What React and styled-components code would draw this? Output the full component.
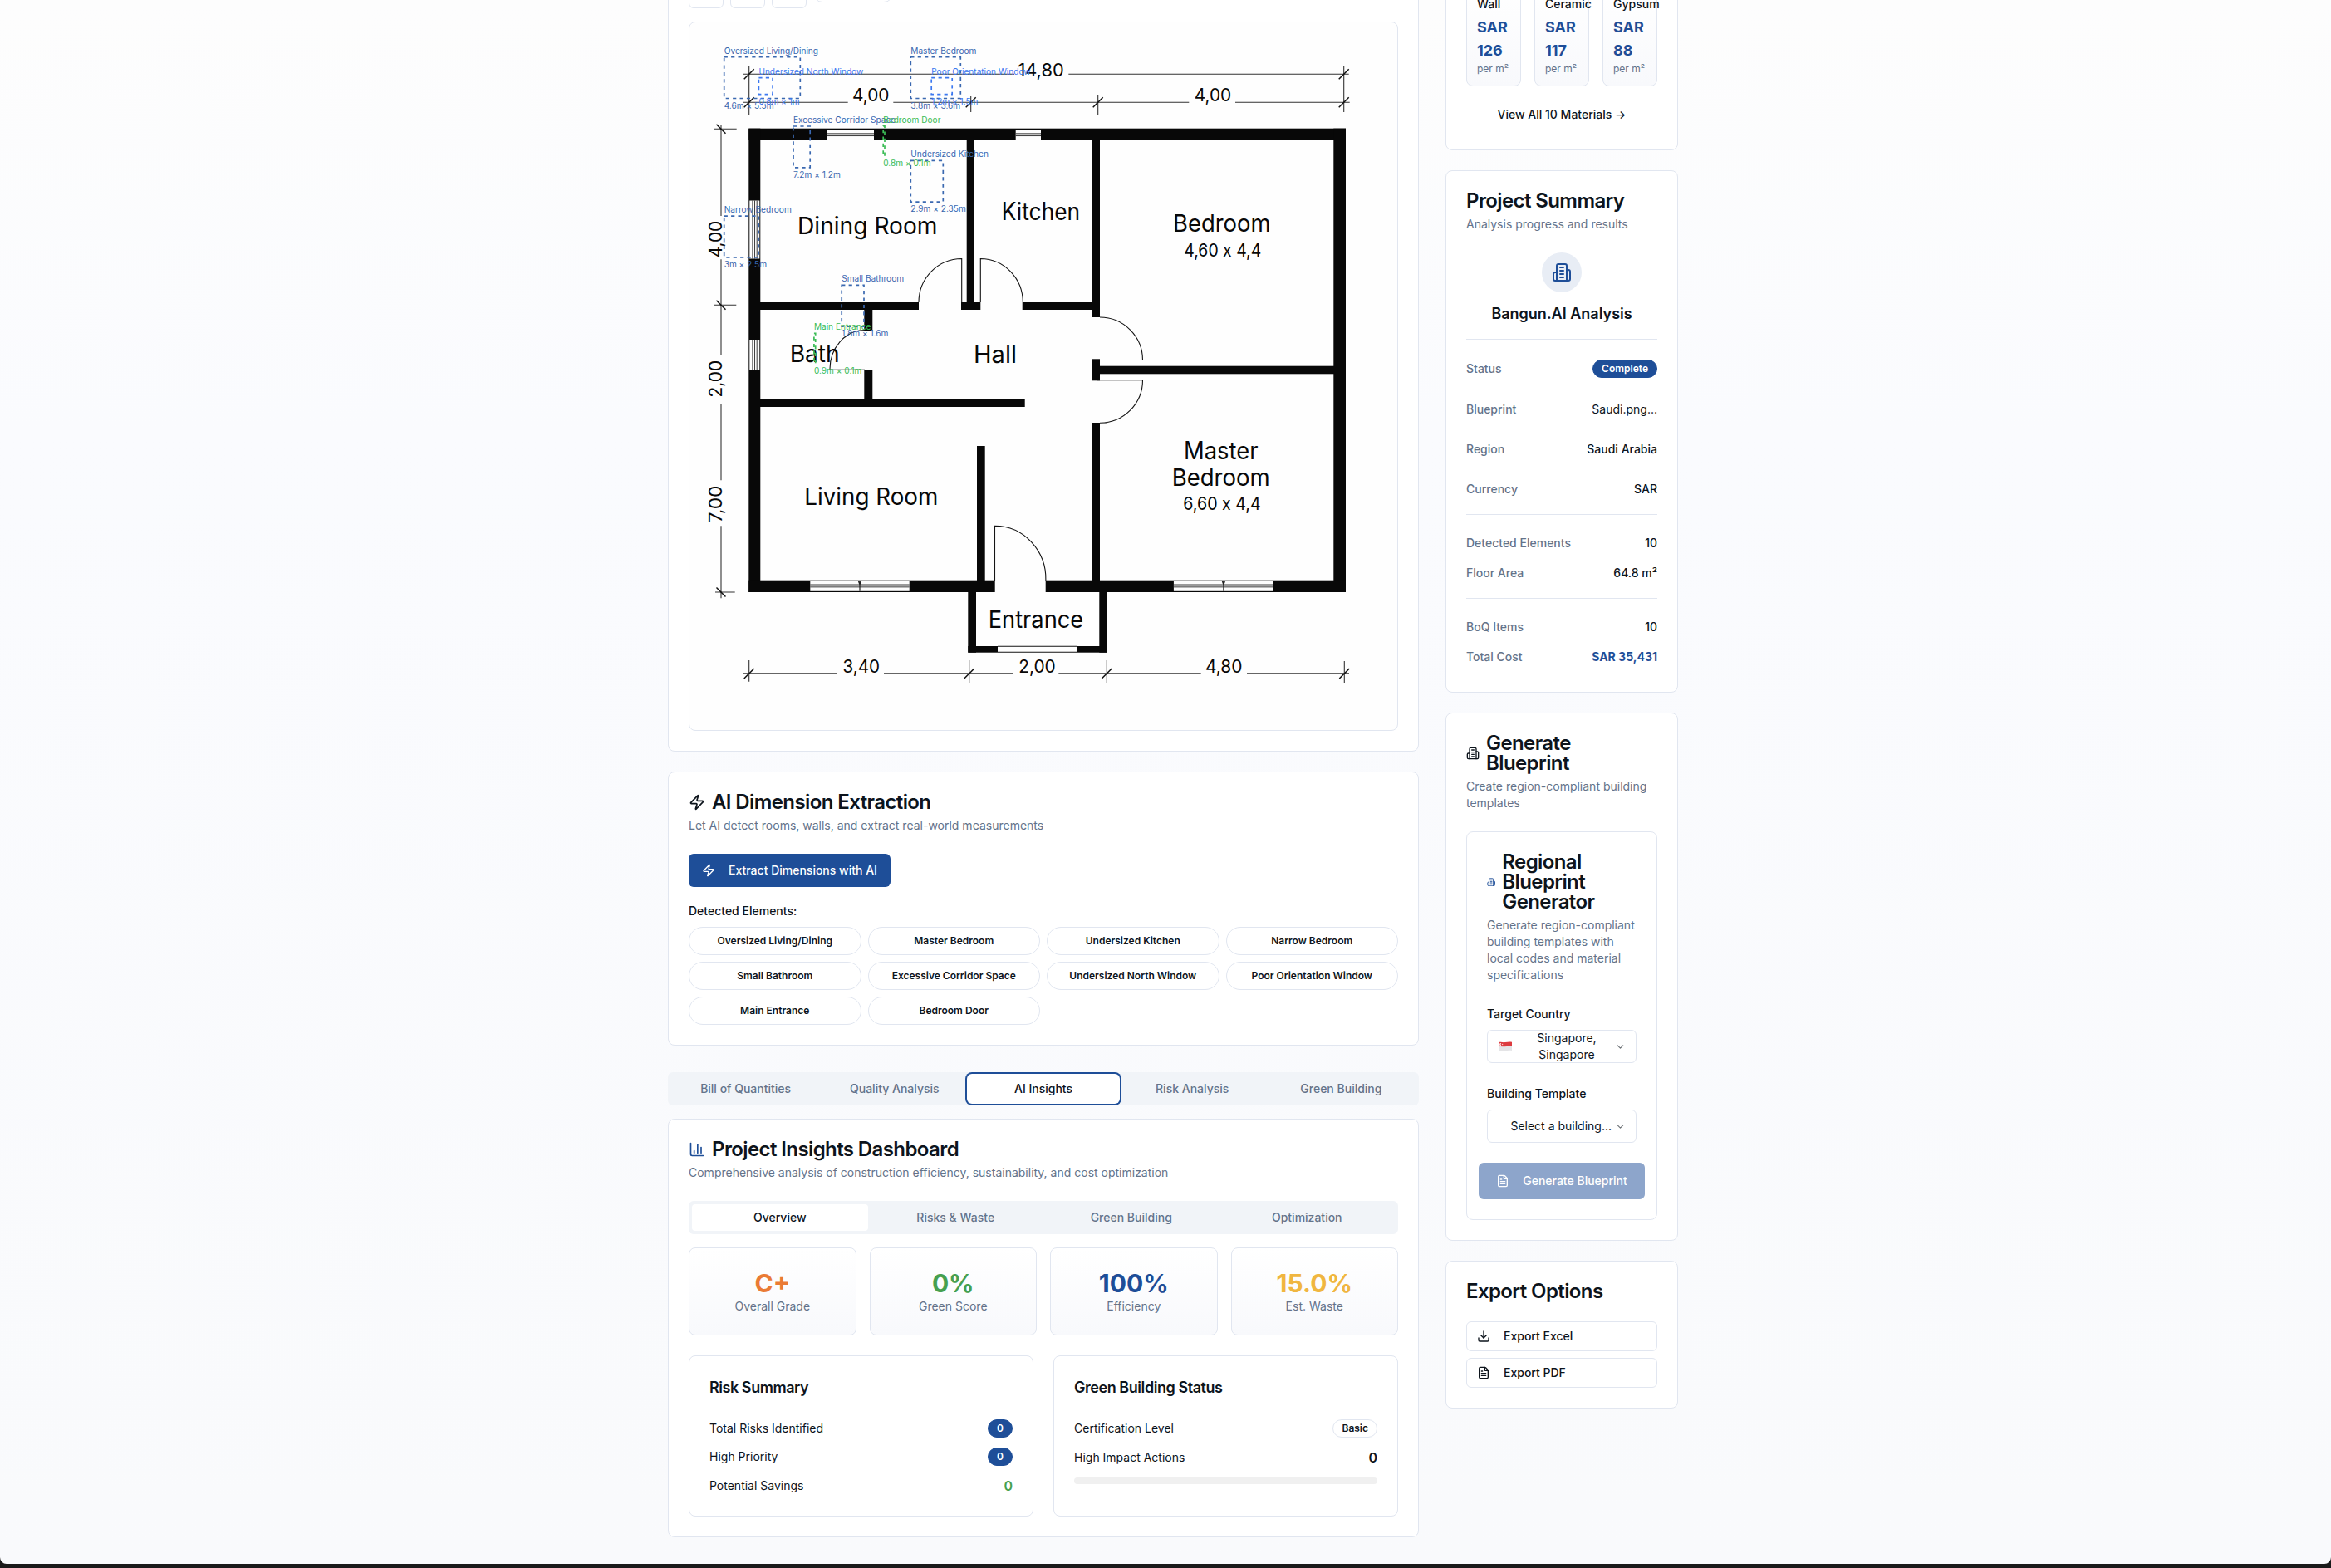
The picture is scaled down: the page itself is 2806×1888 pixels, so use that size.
import React from "react";
import styled, { createGlobalStyle, css } from "styled-components";
import { Zap, ChartColumn, FileText, Download, ChevronDown } from "lucide-react";

const c = {
  ink: "#0d141c",
  muted: "#64738a",
  border: "#e1e6f0",
  primary: "#1e4e98",
  soft: "#f1f4f8",
  green: "#46a04f",
  orange: "#ea7b35",
  amber: "#f0b640",
};

const GlobalStyle = createGlobalStyle`
  *, *::before, *::after { box-sizing: border-box; }
  body {
    margin: 0;
    background: #1a1a1a;
    color: ${c.ink};
    font-family: Inter, "Liberation Sans", sans-serif;
    font-size: 16px;
    line-height: 24px;
  }
  h2, h3, p { margin: 0; }
  button { font: inherit; color: inherit; background: none; border: 0; padding: 0; }
  svg { display: block; flex-shrink: 0; }
`;

/* ---------- page frame ---------- */

const Page = styled.main`
  height: 1883px;
  overflow: hidden;
  display: flex;
  justify-content: center;
  padding-left: 18px;
  border-radius: 0 0 8px 8px;
  background: linear-gradient(#fdfdfd, #fafbfe 520px, #f9fafc);
`;

const Columns = styled.div`
  width: 1216px;
  margin-top: -51px;
  display: grid;
  grid-template-columns: 904px 280px;
  gap: 32px;
  align-items: start;
`;

const Stack = styled.div`
  display: flex;
  flex-direction: column;
  gap: ${(p) => p.$gap ?? 24}px;
  min-width: 0;
`;

const Card = styled.section`
  border: 1px solid ${c.border};
  border-radius: 8px;
  background: #fff;
  padding: 24px;
  min-width: 0;
`;

const PricesCard = styled(Card)`
  padding-top: 32px;
`;

const Header = styled.header`
  display: flex;
  flex-direction: column;
  gap: 6px;
  margin-bottom: 24px;
`;

const Title = styled.h2`
  display: flex;
  align-items: center;
  gap: 8px;
  font-size: 24px;
  line-height: 24px;
  font-weight: 600;
  letter-spacing: -0.6px;
`;

const Text = styled.p`
  font-size: 14px;
  line-height: 20px;
  color: ${c.muted};
`;

/* ---------- blueprint viewer ---------- */

const Toolbar = styled.div`
  display: flex;
  align-items: center;
  gap: 8px;
  height: 36px;
  margin-bottom: 16px;
`;

const ToolButton = styled.button`
  width: 42px;
  height: 36px;
  border: 1px solid ${c.border};
  border-radius: 6px;
  background: #fff;
`;

const ToolBadge = styled.span`
  width: 96px;
  height: 22px;
  border: 1px solid ${c.border};
  border-radius: 11px;
`;

const Viewer = styled.div`
  height: 854px;
  border: 1px solid ${c.border};
  border-radius: 8px;
  overflow: hidden;
  background: #fefefe;
`;

const PlanSvg = styled.svg`
  font-family: Inter, "Liberation Sans", sans-serif;
  font-feature-settings: "calt" 0;
`;

/* ---------- buttons, chips, tabs ---------- */

const Button = styled.button`
  display: flex;
  align-items: center;
  gap: 16px;
  height: ${(p) => p.$height ?? 40}px;
  padding: 0 16px;
  border-radius: 6px;
  font-size: 14px;
  line-height: 20px;
  font-weight: 500;
  white-space: nowrap;
`;

const PrimaryButton = styled(Button)`
  width: max-content;
  background: ${c.primary};
  color: #fff;
`;

const GenerateButton = styled(Button)`
  justify-content: center;
  width: 200px;
  margin: 0 -10px;
  background: ${c.primary};
  color: #fff;
  opacity: 0.5;
`;

const OutlineButton = styled(Button)`
  width: 100%;
  padding: 0 12px;
  border: 1px solid ${c.border};
  background: #fff;
`;

const LinkButton = styled(Button)`
  width: 100%;
  justify-content: center;
  margin-top: 16px;
`;

const FieldLabel = styled.label`
  display: block;
  height: 24px;
  margin-bottom: 8px;
  padding-top: 1px;
  font-size: 14px;
  line-height: 24px;
  font-weight: 500;
`;

const Elements = styled.div`
  margin-top: 16px;
`;

const Chips = styled.div`
  display: grid;
  grid-template-columns: repeat(4, 1fr);
  gap: 8px;
`;

const Chip = styled.span`
  height: 34px;
  border: 1px solid ${c.border};
  border-radius: 17px;
  display: flex;
  align-items: center;
  justify-content: center;
  font-size: 12px;
  line-height: 16px;
  font-weight: 600;
`;

const TabList = styled.div`
  display: grid;
  grid-template-columns: repeat(${(p) => p.$count}, 1fr);
  height: 40px;
  padding: 4px;
  border-radius: 6px;
  background: ${c.soft};
  margin: ${(p) => p.$margin ?? "0"};
`;

const Tab = styled.button`
  border-radius: 4px;
  font-size: 14px;
  line-height: 20px;
  font-weight: 500;
  color: ${c.muted};
  ${(p) =>
    p.$active &&
    css`
      background: #fff;
      color: ${c.ink};
    `}
  ${(p) =>
    p.$focused &&
    css`
      box-shadow: 0 0 0 2px #fff, 0 0 0 4px ${c.primary};
    `}
`;

/* ---------- insights ---------- */

const Stats = styled.div`
  display: grid;
  grid-template-columns: repeat(4, 1fr);
  gap: 16px;
  margin-bottom: 24px;
`;

const Stat = styled.div`
  height: 106px;
  padding: 24px 0;
  border: 1px solid ${c.border};
  border-radius: 8px;
  background: linear-gradient(#fff, #f8f9fc);
  text-align: center;
`;

const StatValue = styled.div`
  font-size: 30px;
  line-height: 36px;
  font-weight: 700;
  color: ${(p) => p.$color};
`;

const Pair = styled.div`
  display: grid;
  grid-template-columns: 1fr 1fr;
  gap: 24px;
`;

const SubTitle = styled.h3`
  font-size: 18px;
  line-height: 28px;
  font-weight: 600;
  letter-spacing: -0.45px;
  margin-bottom: 24px;
`;

const Line = styled.div`
  display: flex;
  align-items: center;
  justify-content: space-between;
  font-size: 14px;
  line-height: 20px;
`;

const Badge = styled.span`
  height: 22px;
  padding: 0 10px;
  border: 1px solid ${(p) => (p.$outline ? c.border : c.primary)};
  border-radius: 11px;
  background: ${(p) => (p.$outline ? "#fff" : c.primary)};
  color: ${(p) => (p.$outline ? c.ink : "#fff")};
  font-size: 12px;
  line-height: 20px;
  font-weight: 600;
`;

const Amount = styled.span`
  font-size: 16px;
  line-height: 24px;
  font-weight: 600;
  color: ${(p) => (p.$good ? c.green : c.ink)};
`;

const Progress = styled.div`
  height: 8px;
  border-radius: 4px;
  background: #f0f0f0;
`;

/* ---------- sidebar ---------- */

const Tiles = styled.div`
  display: grid;
  grid-template-columns: repeat(3, 1fr);
  gap: 16px;
`;

const Tile = styled.div`
  min-width: 0;
  padding: 12px;
  border: 1px solid ${c.border};
  border-radius: 8px;
  background: linear-gradient(#fff, #f8f9fc);
`;

const TileName = styled.div`
  font-size: 14px;
  line-height: 20px;
  font-weight: 500;
  margin-bottom: 4px;
`;

const TilePrice = styled.div`
  font-size: 18px;
  line-height: 28px;
  font-weight: 700;
  color: ${c.primary};
`;

const TileUnit = styled.div`
  font-size: 12px;
  line-height: 16px;
  color: ${c.muted};
  white-space: nowrap;
`;

const Brand = styled.div`
  display: flex;
  flex-direction: column;
  align-items: center;
  gap: 12px;
  padding-bottom: 16px;
  border-bottom: 1px solid ${c.border};
  margin-bottom: 16px;
  font-size: 18px;
  line-height: 28px;
  font-weight: 600;
`;

const Disc = styled.span`
  width: 48px;
  height: 48px;
  border-radius: 50%;
  display: grid;
  place-items: center;
  background: #e8edf5;
  color: ${c.primary};
`;

const Row = styled(Line)`
  padding: 8px 0;
  font-weight: 500;
  color: ${c.muted};
`;

const Value = styled.span`
  color: ${(p) => (p.$total ? c.primary : c.ink)};
  font-weight: ${(p) => (p.$total ? 700 : p.$plain ? 400 : 500)};
`;

const Group = styled.div`
  border-top: 1px solid ${c.border};
  padding-top: 16px;
`;

const Select = styled.button`
  width: 100%;
  height: 40px;
  padding: 0 12px 0 13px;
  border: 1px solid ${c.border};
  border-radius: 6px;
  display: flex;
  align-items: center;
  justify-content: space-between;
  font-size: 14px;
  line-height: 20px;
`;

const SelectText = styled.span`
  flex: 1;
  padding: ${(p) => p.$pad};
  text-align: ${(p) => p.$align};
  white-space: pre-line;
`;

const Blue = styled.span`
  display: flex;
  color: ${c.primary};
`;

const Chevron = styled(ChevronDown)`
  opacity: 0.6;
`;

/* ---------- drawings ---------- */

const Building = ({ size, weight = 2 }) => (
  <svg width={size} height={size} viewBox="0 0 24 24" fill="none" stroke="currentColor" strokeWidth={weight} strokeLinecap="round" strokeLinejoin="round">
    <path d="M6 22V4a2 2 0 0 1 2-2h8a2 2 0 0 1 2 2v18Z" />
    <path d="M6 12H4a2 2 0 0 0-2 2v6a2 2 0 0 0 2 2h2" />
    <path d="M18 9h2a2 2 0 0 1 2 2v9a2 2 0 0 1-2 2h-2" />
    <path d="M10 6h4M10 10h4M10 14h4M10 18h4" />
  </svg>
);

const SingaporeFlag = () => (
  <svg width="16" height="12" viewBox="0 0 16 12">
    <path d="M0 1.2C3-.2 5 1.6 8 1.1S13 0 16 .8V6C13 5.200 11 6 8 6.500S3 5.600 0 6.600Z" fill="#dd3b3f" />
    <path d="M0 6.600C3 5.600 5 7 8 6.500S13 5.200 16 6v5c-3-.8-5 0-8 .5S3 10.600 0 11.600Z" fill="#e4e4e6" />
    <path d="M3.200 2.200a1.500 1.500 0 1 0 0 2.800 1.700 1.700 0 0 1 0-2.800Z" fill="#fff" />
    <circle cx="4.600" cy="3.500" r=".7" fill="#f6c9ca" />
  </svg>
);

// Solid walls: [x1, y1, x2, y2]
const walls = [
  [901.3, 154.7, 1620, 169],
  [901.3, 154.7, 915.3, 713],
  [1605.3, 154.7, 1620, 713],
  [901.3, 698.7, 1197.7, 713],
  [1258.7, 698.7, 1620, 713],
  [1163.7, 168, 1173, 365],
  [1157, 364, 1180.3, 373],
  [914, 364, 1106, 373],
  [1230.7, 364, 1315, 373],
  [1314, 168, 1324, 382],
  [1314, 432.3, 1324, 458.3],
  [1314, 509, 1324, 699],
  [1323, 440.7, 1606, 450.3],
  [1040.3, 372, 1050.3, 398],
  [1040.3, 445.3, 1050.3, 481],
  [914, 480.3, 1233.7, 490],
  [1176, 537, 1185.7, 699],
  [1165.3, 712, 1175, 785.7],
  [1323.3, 712, 1332.3, 785.7],
  [1165.3, 778, 1201, 785.7],
  [1297, 778, 1332.3, 785.7],
];

// Window openings: [x, y, width, height, vertical?, mullion?]
const windows = [
  [995.3, 157, 56.7, 11.3, false, false],
  [1222.7, 157, 30.3, 11.3, false, false],
  [902.3, 241.5, 12, 70, true, false],
  [902.3, 409, 12, 36.5, true, false],
  [975.3, 700, 119.4, 11.8, false, true],
  [1412.9, 700, 120, 11.8, false, true],
];

const Opening = ({ x, y, w, h, vertical, mullion }) => (
  <g stroke="#222" strokeWidth=".9">
    <rect x={x} y={y} width={w} height={h} fill="#fdfdfd" stroke="none" />
    {vertical
      ? [0.3, 0.52, 0.74].map((k) => <path key={k} d={`M${x + w * k} ${y}v${h}`} />)
      : [0.34, 0.58].map((k) => <path key={k} d={`M${x} ${y + h * k}h${w}`} />)}
    {mullion && <path fill="none" strokeWidth="1.200" d={`M${x + w / 2} ${y}v${h}m-1.500 ${-h}l1.500 4l1.500-4`} />}
  </g>
);

const doors = [
  "M1157.700 364V311.500A51.700 52.500 0 0 0 1106 364",
  "M1180.300 364V311.500A51 52.500 0 0 1 1231.300 364",
  "M1324 382A51.500 51.500 0 0 1 1375.500 433.500H1320",
  "M1320 457.800H1375.500A51.500 51.500 0 0 1 1324 509.300",
  "M1041 397.500A42 47 0 0 0 999 445.300H1041",
  "M1197.500 699V633.200A61.300 64 0 0 1 1258.900 699",
  "M1201 778.300H1297M1201 785.300H1297",
];

const dimensionLines =
  "M895 89.300H1221M1286.300 89.300H1623.700" +
  "M895 123.300H1020.700M1075.300 123.300H1431.300M1487 123.300H1624.700" +
  "M895 810.700H1008M1064 810.700H1219.300M1274.300 810.700H1445.700M1501 810.700H1624" +
  "M868 150V260M868 312.300V427.700M868 486V578.300M868 633.300V720.300" +
  "M901.700 80V138.300M1168.700 115V135M1321.700 114V138.700M1617.700 79V135" +
  "M901.700 795V820.700M1166.700 795V822M1332.300 795V822M1618.300 796V822" +
  "M860 155.300H886.700M860 367.300H886.300M861 713H884.700";

const rising = [
  [901.7, 89.3], [901.7, 123.3], [1168.7, 123.3], [1321.7, 123.3], [1617.7, 89.3], [1617.7, 123.3],
  [901.7, 811], [1166.7, 811], [1332.3, 811], [1618.3, 811],
];
const falling = [[868, 155.3], [868, 367.3], [868, 713]];

// Room names and dimensions: [text, x, baseline, width, size]
const roomNames = [
  ["Dining Room", 960, 281.7, 168.5, 28.8],
  ["Kitchen", 1205.7, 265, 94.5, 29.2],
  ["Bath", 950.7, 436, 60, 28.8],
  ["Hall", 1172, 437.3, 52, 28.8],
  ["Living Room", 968.3, 608, 161, 28.8],
  ["Entrance", 1189.7, 756, 114.5, 28.8],
  ["Bedroom", 1412, 279, 117.5, 28.8],
  ["4,60 x 4,4", 1425.3, 308.7, 93, 21.5],
  ["Master", 1425, 552.7, 89.5, 29.2],
  ["Bedroom", 1410.7, 585.3, 118, 28.8],
  ["6,60 x 4,4", 1424.3, 614.3, 93.4, 21.5],
  ["14,80", 1225.4, 91.7, 55.3, 21.4],
  ["4,00", 1025.9, 122, 44.6, 21.4],
  ["4,00", 1437.7, 122, 44.6, 21.4],
  ["3,40", 1014.5, 810.3, 44.6, 21.4],
  ["2,00", 1226.2, 810.3, 44.6, 21.4],
  ["4,80", 1450.9, 810.3, 44.6, 21.4],
];
const sideNames = [["4,00", 310.3], ["2,00", 478.5], ["7,00", 629.3]];

// AI detections: [label, size, x, y, width, height, colour]
const ROOM = "#3a68b0";
const WINDOW = "#3b78f0";
const DOOR = "#3cbc56";
const detections = [
  ["Oversized Living/Dining", "4.6m × 5.5m", 871.7, 68.7, 91.6, 49.8, ROOM],
  ["Master Bedroom", "3.8m × 3.6m", 1096.3, 68.7, 60, 49.8, ROOM],
  ["Undersized Kitchen", "2.9m × 2.35m", 1096.3, 193.4, 39, 49.8, ROOM],
  ["Narrow Bedroom", "3m × 2.5m", 871.7, 260.1, 41.5, 49.8, ROOM],
  ["Small Bathroom", "1.8m × 1.6m", 1013.2, 343.3, 26.8, 49.8, ROOM],
  ["Excessive Corridor Space", "7.2m × 1.2m", 955, 152, 20.2, 49.8, ROOM],
  ["Undersized North Window", "0.8m × 1m", 913.4, 93.7, 16.7, 20, WINDOW],
  ["Poor Orientation Window", "1.2m × 1.5m", 1121.2, 93.7, 25, 20, WINDOW],
  ["Main Entrance", "0.9m × 0.1m", 979.9, 401.3, 1.8, 36, DOOR],
  ["Bedroom Door", "0.8m × 0.1m", 1063.2, 151.8, 1.8, 36, DOOR],
];

const FloorPlan = () => (
  <PlanSvg width="852" height="852" viewBox="830 27 852 852">
    <g fill="#080808">
      {walls.map(([a, b, x, y], i) => (
        <rect key={i} x={a} y={b} width={x - a} height={y - b} />
      ))}
    </g>
    {windows.map(([x, y, w, h, vertical, mullion], i) => (
      <Opening key={i} x={x} y={y} w={w} h={h} vertical={vertical} mullion={mullion} />
    ))}
    <g fill="none" stroke="#141414" strokeWidth="1.100">
      {doors.map((d) => <path key={d} d={d} />)}
    </g>
    <path d={dimensionLines} fill="none" stroke="#333" strokeWidth="1.100" />
    <g stroke="#111" strokeWidth="1.500">
      {rising.map(([x, y], i) => <path key={i} d={`M${x - 6} ${y + 6}l12 -12`} />)}
      {falling.map(([x, y], i) => <path key={i} d={`M${x - 5.5} ${y - 5.5}l11 11`} />)}
    </g>
    <g fill="#080808">
      {roomNames.map(([t, x, y, w, s], i) => (
        <text key={i} x={x} y={y} fontSize={s} textLength={w} lengthAdjust="spacingAndGlyphs">{t}</text>
      ))}
      {sideNames.map(([t, y]) => (
        <text key={t} transform={`translate(869 ${y}) rotate(-90)`} fontSize="21.400" textLength="44.600" lengthAdjust="spacingAndGlyphs">{t}</text>
      ))}
    </g>
    {detections.map(([label, size, x, y, w, h, color]) => (
      <g key={label} fill={color} fontSize="10.100">
        <rect x={x} y={y} width={w} height={h} fill="none" stroke={color} strokeWidth="1.700" strokeDasharray="4.200 4.200" />
        <text x={x} y={y - 4.1}>{label}</text>
        <text x={x} y={y + h + 12.2}>{size}</text>
      </g>
    ))}
  </PlanSvg>
);

/* ---------- data ---------- */

const elements = [
  "Oversized Living/Dining", "Master Bedroom", "Undersized Kitchen", "Narrow Bedroom", "Small Bathroom",
  "Excessive Corridor Space", "Undersized North Window", "Poor Orientation Window", "Main Entrance", "Bedroom Door",
];
const reportTabs = ["Bill of Quantities", "Quality Analysis", "AI Insights", "Risk Analysis", "Green Building"];
const insightTabs = ["Overview", "Risks & Waste", "Green Building", "Optimization"];
const stats = [
  ["C+", "Overall Grade", c.orange],
  ["0%", "Green Score", c.green],
  ["100%", "Efficiency", c.primary],
  ["15.0%", "Est. Waste", c.amber],
];
const materials = [["Wall", "126"], ["Ceramic", "117"], ["Gypsum", "88"]];

export default function App() {
  return (
    <>
      <GlobalStyle />
      <Page>
        <Columns>
          <Stack>
            <Card>
              <Toolbar>
                <ToolButton />
                <ToolButton />
                <ToolButton />
                <ToolBadge />
              </Toolbar>
              <Viewer>
                <FloorPlan />
              </Viewer>
            </Card>

            <Card>
              <Header>
                <Title><Zap size={20} />AI Dimension Extraction</Title>
                <Text>Let AI detect rooms, walls, and extract real-world measurements</Text>
              </Header>
              <PrimaryButton><Zap size={16} />Extract Dimensions with AI</PrimaryButton>
              <Elements>
                <FieldLabel>Detected Elements:</FieldLabel>
                <Chips>
                  {elements.map((name) => <Chip key={name}>{name}</Chip>)}
                </Chips>
              </Elements>
            </Card>

            <Stack $gap={16}>
              <TabList $count={5} $margin="8px 0 0">
                {reportTabs.map((t) => (
                  <Tab key={t} $active={t === "AI Insights"} $focused={t === "AI Insights"}>{t}</Tab>
                ))}
              </TabList>

              <Card>
                <Header>
                  <Title><Blue><ChartColumn size={20} /></Blue>Project Insights Dashboard</Title>
                  <Text>Comprehensive analysis of construction efficiency, sustainability, and cost optimization</Text>
                </Header>
                <TabList $count={4} $margin="0 0 16px">
                  {insightTabs.map((t) => <Tab key={t} $active={t === "Overview"}>{t}</Tab>)}
                </TabList>
                <Stats>
                  {stats.map(([value, label, color]) => (
                    <Stat key={label}>
                      <StatValue $color={color}>{value}</StatValue>
                      <Text>{label}</Text>
                    </Stat>
                  ))}
                </Stats>
                <Pair>
                  <Card>
                    <SubTitle>Risk Summary</SubTitle>
                    <Stack $gap={12}>
                      <Line>Total Risks Identified<Badge>0</Badge></Line>
                      <Line>High Priority<Badge>0</Badge></Line>
                      <Line>Potential Savings<Amount $good>0</Amount></Line>
                    </Stack>
                  </Card>
                  <Card>
                    <SubTitle>Green Building Status</SubTitle>
                    <Stack $gap={12}>
                      <Line>Certification Level<Badge $outline>Basic</Badge></Line>
                      <Line>High Impact Actions<Amount>0</Amount></Line>
                      <Progress />
                    </Stack>
                  </Card>
                </Pair>
              </Card>
            </Stack>
          </Stack>

          <Stack>
            <PricesCard>
              <Tiles>
                {materials.map(([name, price]) => (
                  <Tile key={name}>
                    <TileName>{name}</TileName>
                    <TilePrice>SAR {price}</TilePrice>
                    <TileUnit>per m²</TileUnit>
                  </Tile>
                ))}
              </Tiles>
              <LinkButton $height={36}>View All 10 Materials →</LinkButton>
            </PricesCard>

            <Card>
              <Header>
                <Title>Project Summary</Title>
                <Text>Analysis progress and results</Text>
              </Header>
              <Brand>
                <Disc><Building size={24} /></Disc>
                Bangun.AI Analysis
              </Brand>
              <Stack $gap={12}>
                <Row>Status<Badge>Complete</Badge></Row>
                <Row>Blueprint<Value $plain>Saudi.png...</Value></Row>
                <Row>Region<Value>Saudi Arabia</Value></Row>
                <Row>Currency<Value>SAR</Value></Row>
                <Group>
                  <Row>Detected Elements<Value>10</Value></Row>
                  <Row>Floor Area<Value>64.8 m²</Value></Row>
                </Group>
                <Group>
                  <Row>BoQ Items<Value>10</Value></Row>
                  <Row>Total Cost<Value $total>SAR 35,431</Value></Row>
                </Group>
              </Stack>
            </Card>

            <Card>
              <Header>
                <Title><Building size={16} />Generate Blueprint</Title>
                <Text>Create region-compliant building templates</Text>
              </Header>
              <Card>
                <Header>
                  <Title><Blue><Building size={10.3} weight={2.3} /></Blue>Regional Blueprint Generator</Title>
                  <Text>Generate region-compliant building templates with local codes and material specifications</Text>
                </Header>
                <Stack>
                  <div>
                    <FieldLabel>Target Country</FieldLabel>
                    <Select>
                      <SingaporeFlag />
                      <SelectText $align="center" $pad="0 0 0 8px">{"Singapore,\nSingapore"}</SelectText>
                      <Chevron size={13} />
                    </Select>
                  </div>
                  <div>
                    <FieldLabel>Building Template</FieldLabel>
                    <Select>
                      <SelectText $align="right" $pad="0 4px 0 0">Select a building...</SelectText>
                      <Chevron size={13} />
                    </Select>
                  </div>
                  <GenerateButton $height={44}><FileText size={16} />Generate Blueprint</GenerateButton>
                </Stack>
              </Card>
            </Card>

            <Card>
              <Header>
                <Title>Export Options</Title>
              </Header>
              <Stack $gap={8}>
                <OutlineButton $height={36}><Download size={16} />Export Excel</OutlineButton>
                <OutlineButton $height={36}><FileText size={16} />Export PDF</OutlineButton>
              </Stack>
            </Card>
          </Stack>
        </Columns>
      </Page>
    </>
  );
}
